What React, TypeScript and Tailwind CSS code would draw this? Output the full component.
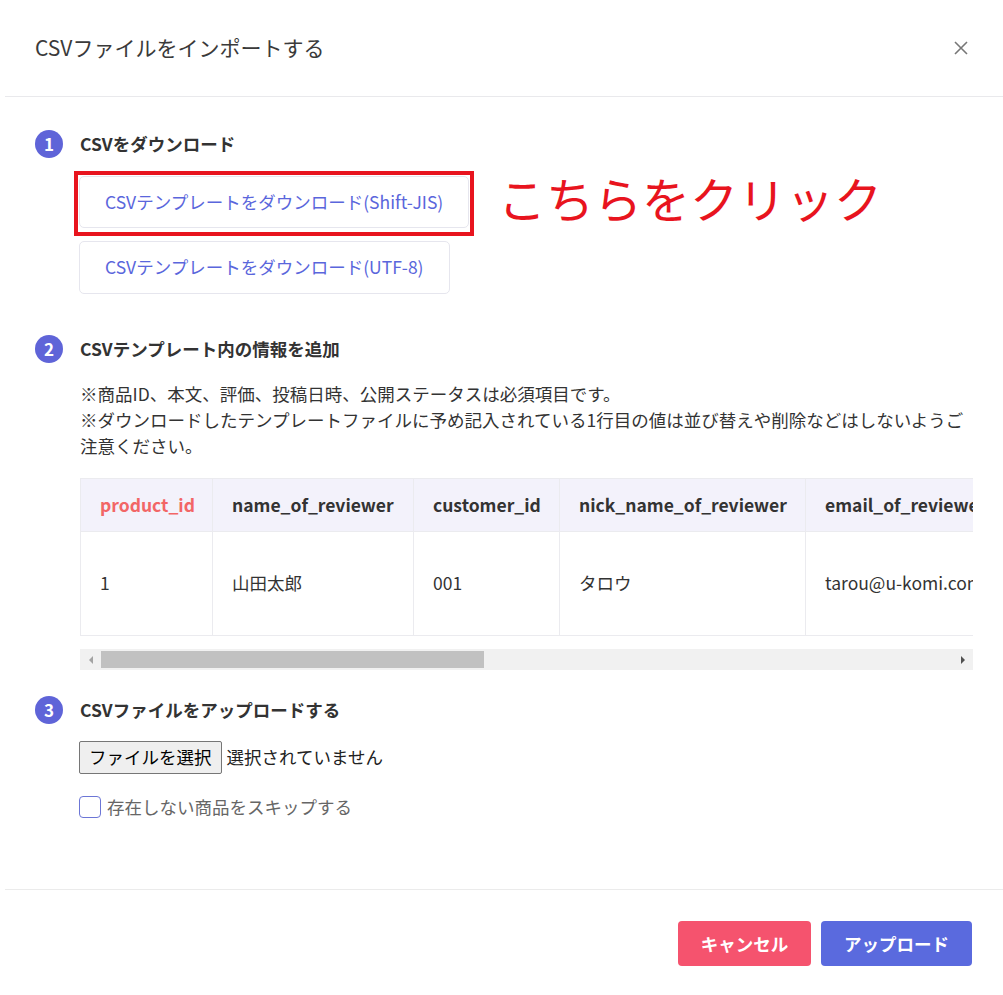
import React from 'react';

const font = { fontFamily: '"Noto Sans CJK JP", "Noto Sans", sans-serif' };

function StepBadge({ n }: { n: number }) {
  return (
    <span className="flex h-[28px] w-[28px] shrink-0 items-center justify-center rounded-full bg-[#5f64d8] text-[17px] font-bold text-white">
      {n}
    </span>
  );
}

function StepTitle({ n, children }: { n: number; children: React.ReactNode }) {
  return (
    <div className="flex items-center gap-[17px]">
      <StepBadge n={n} />
      <h3 className="text-[17.5px] font-bold leading-[28px] text-[#333]">{children}</h3>
    </div>
  );
}

const columns = [
  { key: 'product_id', w: 'w-[132px]', value: '1', required: true },
  { key: 'name_of_reviewer', w: 'w-[201px]', value: '山田太郎' },
  { key: 'customer_id', w: 'w-[146px]', value: '001' },
  { key: 'nick_name_of_reviewer', w: 'w-[246px]', value: 'タロウ' },
  { key: 'email_of_reviewer', w: 'w-[210px]', value: 'tarou@u-komi.com' },
  { key: 'title', w: 'w-[160px]', value: 'とても良い' },
];

export default function App() {
  return (
    <div className="min-h-[995px] bg-white" style={font}>
      {/* Header */}
      <div className="flex h-[96px] items-center justify-between pl-[35px] pr-[34px]">
        <h2 className="text-[21px] font-normal text-[#3a3a3a]">CSVファイルをインポートする</h2>
        <button type="button" className="text-[#777]" aria-label="close">
          <svg width="16" height="16" viewBox="0 0 16 16" fill="none" stroke="currentColor" strokeWidth="1.6">
            <path d="M2 2L14 14M14 2L2 14" />
          </svg>
        </button>
      </div>
      <div className="ml-[5px] border-t border-[#e9e9ec]" />

      {/* Body */}
      <div className="pl-[35px] pr-[30px] pt-[33px]">
        {/* Step 1 */}
        <StepTitle n={1}>CSVをダウンロード</StepTitle>
        <div className="ml-[44px] mt-[18px] flex flex-col items-start gap-[13px]">
          <div className="relative flex">
            <button
              type="button"
              className="h-[52px] rounded-[5px] border border-[#e6e6ee] bg-white px-[25px] text-[17.5px] text-[#5a66dc]"
            >
              CSVテンプレートをダウンロード(Shift-JIS)
            </button>
            <span className="pointer-events-none absolute -inset-x-[5px] -bottom-[8px] -top-[5px] border-[4px] border-[#e8141e]" />
            <span className="absolute left-[419px] top-[-9px] whitespace-nowrap text-[48px] font-normal leading-[60px] text-[#e8141e]">
              こちらをクリック
            </span>
          </div>
          <button
            type="button"
            className="h-[53px] rounded-[5px] border border-[#e6e6ee] bg-white px-[25px] text-[17.5px] text-[#5a66dc]"
          >
            CSVテンプレートをダウンロード(UTF-8)
          </button>
        </div>

        {/* Step 2 */}
        <div className="mt-[41px]">
          <StepTitle n={2}>CSVテンプレート内の情報を追加</StepTitle>
        </div>
        <div className="ml-[45px] mt-[18px] text-[17.5px] leading-[26px] text-[#333]">
          <p>※商品ID、本文、評価、投稿日時、公開ステータスは必須項目です。</p>
          <p>※ダウンロードしたテンプレートファイルに予め記入されている1行目の値は並び替えや削除などはしないようご注意ください。</p>
        </div>

        <div className="ml-[45px] mt-[19px]">
          <div className="overflow-hidden">
            <table className="w-[1095px] table-fixed border-collapse text-[17.5px] text-[#333]">
              <thead>
                <tr className="h-[53px] bg-[#f3f2fb]">
                  {columns.map(c => (
                    <th
                      key={c.key}
                      className={`${c.w} whitespace-nowrap border border-[#ebebef] px-[19px] text-left font-bold ${c.required ? 'text-[#f26666]' : 'text-[#333]'}`}
                    >
                      {c.key}
                    </th>
                  ))}
                </tr>
              </thead>
              <tbody>
                <tr className="h-[104px]">
                  {columns.map(c => (
                    <td key={c.key} className="whitespace-nowrap border border-[#ebebef] px-[19px] font-normal">
                      {c.value}
                    </td>
                  ))}
                </tr>
              </tbody>
            </table>
          </div>
          {/* scrollbar */}
          <div className="mt-[13px] flex h-[21px] items-center bg-[#f1f1f1]">
            <div className="flex w-[21px] justify-center">
              <span className="h-0 w-0 border-y-[4px] border-r-[4px] border-y-transparent border-r-[#a3a3a3]" />
            </div>
            <div className="h-[17px] w-[383px] bg-[#c1c1c1]" />
            <div className="flex-1" />
            <div className="flex w-[21px] justify-center">
              <span className="h-0 w-0 border-y-[4px] border-l-[4px] border-y-transparent border-l-[#505050]" />
            </div>
          </div>
        </div>

        {/* Step 3 */}
        <div className="mt-[26px]">
          <StepTitle n={3}>CSVファイルをアップロードする</StepTitle>
        </div>
        <div className="ml-[44px] mt-[17px] flex items-center gap-[5px]">
          <button
            type="button"
            className="h-[33px] rounded-[2px] border border-[#767676] bg-[#efefef] px-[9px] text-[17.5px] text-black"
          >
            ファイルを選択
          </button>
          <span className="text-[17.5px] text-[#222]">選択されていません</span>
        </div>
        <label className="ml-[44px] mt-[20px] flex items-center gap-[6px] text-[17.5px] text-[#666]">
          <span className="h-[22px] w-[22px] rounded-[4px] border border-[#6c76d6] bg-white" />
          存在しない商品をスキップする
        </label>
      </div>

      {/* Footer */}
      <div className="ml-[5px] mt-[69px] border-t border-[#ebebeb]" />
      <div className="flex justify-end gap-[10px] pr-[31px] pt-[31px]">
        <button
          type="button"
          className="h-[45px] w-[133px] rounded-[4px] bg-[#f5536e] text-[17.5px] font-bold text-white"
        >
          キャンセル
        </button>
        <button
          type="button"
          className="h-[45px] w-[151px] rounded-[4px] bg-[#5a6ade] text-[17.5px] font-bold text-white"
        >
          アップロード
        </button>
      </div>
    </div>
  );
}
